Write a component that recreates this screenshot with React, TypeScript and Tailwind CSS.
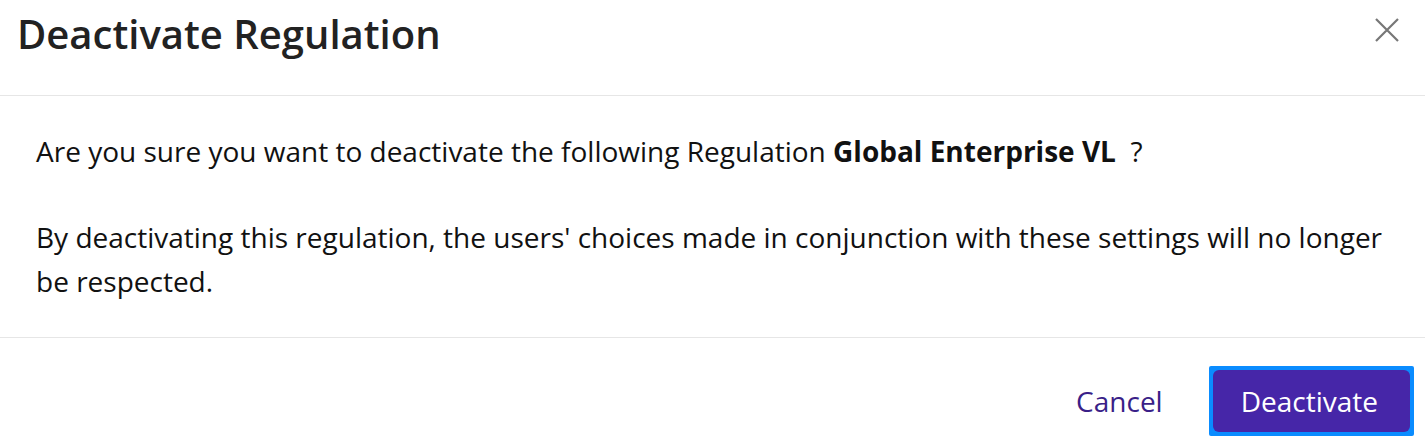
import React from 'react';

const font = { fontFamily: '"Open Sans", "Liberation Sans", sans-serif' };

export default function App() {
  return (
    <div className="w-[1425px] h-[444px] bg-white overflow-hidden" style={font}>
      {/* Header */}
      <div className="h-[96px] flex items-start justify-between border-b border-[#e6e6e6] pl-[17px] pr-[26px]">
        <h1 className="mt-[10px] text-[40px] leading-[48px] font-semibold text-[#222222]">
          Deactivate Regulation
        </h1>
        <button className="mt-[17px] w-[25px] h-[25px] flex items-center justify-center text-[#777777]">
          <svg width="24" height="24" viewBox="0 0 24 24" fill="none" stroke="currentColor" strokeWidth="2.2">
            <path d="M1 1 L23 23 M23 1 L1 23" />
          </svg>
        </button>
      </div>

      {/* Body */}
      <div className="px-[36px] pt-[33px] pb-[34px] border-b border-[#e6e6e6] text-[28px] leading-[44px] text-[#111111]">
        <p>
          Are you sure you want to deactivate the following Regulation{' '}
          <span className="font-bold">Global Enterprise VL</span>&nbsp; ?
        </p>
        <p className="mt-[42px]">
          By deactivating this regulation, the users' choices made in conjunction with these settings will no longer
          be respected.
        </p>
      </div>

      {/* Footer */}
      <div className="flex items-center justify-end pt-[28px] pr-[11px] gap-[46px]">
        <button className="text-[28px] text-[#3a1f88]">Cancel</button>
        <div className="p-[4px] bg-[#0a8cff] rounded-[2px]">
          <button className="h-[62px] pl-[28px] pr-[32px] rounded-[6px] bg-[#4626a8] text-white text-[28px]">
            Deactivate
          </button>
        </div>
      </div>
    </div>
  );
}
